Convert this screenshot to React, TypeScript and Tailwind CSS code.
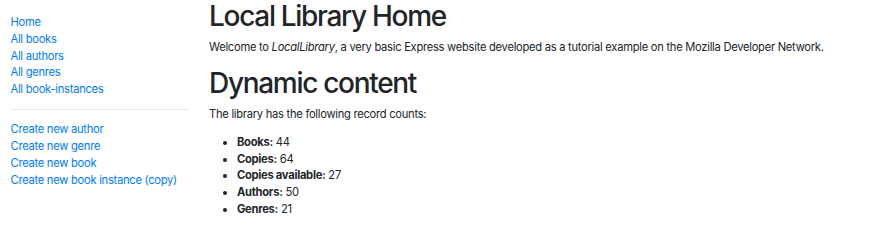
const counts = [
  { label: "Books:", value: 44 },
  { label: "Copies:", value: 64 },
  { label: "Copies available:", value: 27 },
  { label: "Authors:", value: 50 },
  { label: "Genres:", value: 21 },
];

const listLinks = ["Home", "All books", "All authors", "All genres", "All book-instances"];
const createLinks = ["Create new author", "Create new genre", "Create new book", "Create new book instance (copy)"];

const App = () => {
  return (
    <div
      className="min-h-screen bg-white text-[#212529] text-[11.2px] leading-[16.8px] tracking-[-0.28px]"
      style={{ fontFamily: "Inter, 'Noto Sans', sans-serif" }}
    >
      <div className="flex px-[10.5px]">
        {/* Sidebar */}
        <div className="w-[188px] shrink-0 pr-[10.5px] pt-[14px]">
          <ul className="flex flex-col">
            {listLinks.map((l) => (
              <li key={l}>
                <a href="#" className="text-[#007bff]">{l}</a>
              </li>
            ))}
          </ul>
          <hr className="my-[11.2px] border-t border-[#e8e8e8]" />
          <ul className="flex flex-col">
            {createLinks.map((l) => (
              <li key={l}>
                <a href="#" className="text-[#007bff]">{l}</a>
              </li>
            ))}
          </ul>
        </div>

        {/* Main content */}
        <div className="flex-1 pl-[10.5px]">
          <h1 className="text-[28px] leading-[33.6px] font-medium tracking-[-1.3px] mb-[5px]">Local Library Home</h1>
          <p className="mb-[11.2px]">
            Welcome to <em>LocalLibrary</em>, a very basic Express website developed as a tutorial example on the
            Mozilla Developer Network.
          </p>
          <h1 className="text-[28px] leading-[33.6px] font-medium tracking-[-1.3px] mb-[5.6px]">Dynamic content</h1>
          <p className="mb-[11.2px]">The library has the following record counts:</p>
          <ul className="list-disc pl-[28px]">
            {counts.map((c) => (
              <li key={c.label}>
                <strong className="font-bold">{c.label}</strong> {c.value}
              </li>
            ))}
          </ul>
        </div>
      </div>
    </div>
  );
};

export default App;
